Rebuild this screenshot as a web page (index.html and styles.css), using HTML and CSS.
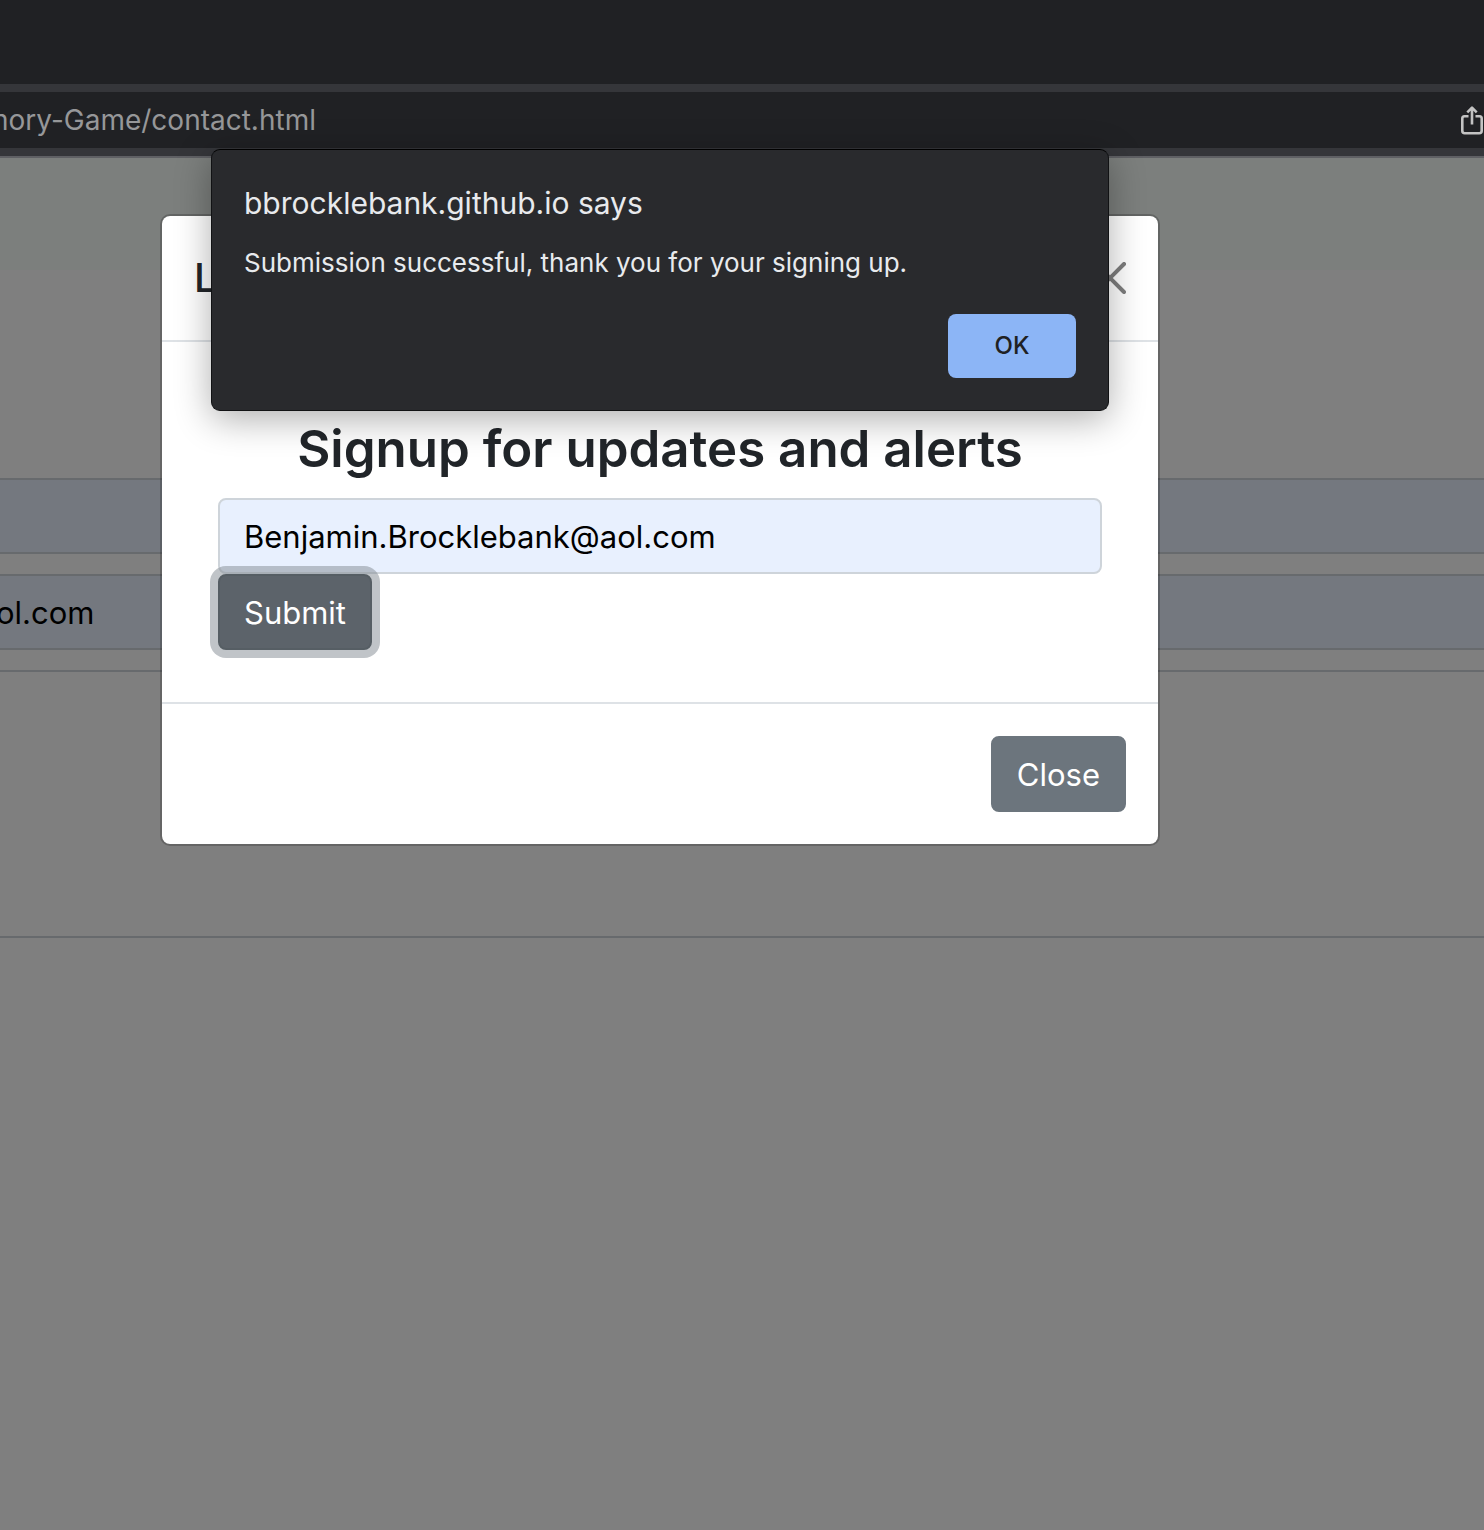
FILE: index.html
```
<!DOCTYPE html>
<html lang="en">
<head>
<meta charset="utf-8">
<meta name="viewport" content="width=device-width, initial-scale=1">
<title>Contact</title>
<link rel="stylesheet" href="styles.css">
</head>
<body>
<div class="browser">
  <div class="tab-strip"></div>
  <div class="toolbar">
    <div class="omnibox">
      <span class="url">mory-Game/contact.html</span>
      <button class="share" type="button" aria-label="Share">
        <svg viewBox="0 0 24 32" width="24" height="32" fill="none" stroke="currentColor" stroke-width="2.600" stroke-linecap="butt" stroke-linejoin="round">
          <path d="M8.500 12.300H4.500Q2.300 12.300 2.300 14.500V26.800Q2.300 29.300 4.800 29.300H19.200Q21.700 29.300 21.700 26.800V14.500Q21.700 12.300 19.500 12.300H15.500M12 20.500V4M7.300 8.300L12 3.600L16.700 8.300"/>
        </svg>
      </button>
    </div>
  </div>
  <div class="viewport">
    <div class="page">
      <header class="page-header"></header>
      <form class="contact-form">
        <input class="field" type="text" aria-label="Name">
        <input class="field" type="text" aria-label="Email" value="ol.com">
        <div class="message"></div>
      </form>
    </div>
    <div class="backdrop">
      <section class="modal" role="dialog" aria-label="Signup">
        <header class="modal-header">
          <h5 class="modal-title">L</h5>
          <button class="modal-x" type="button" aria-label="Dismiss">
            <svg viewBox="0 0 16 16" width="32" height="32"><path fill="currentColor" d="M.293.293a1 1 0 011.414 0L8 6.586 14.293.293a1 1 0 111.414 1.414L9.414 8l6.293 6.293a1 1 0 01-1.414 1.414L8 9.414l-6.293 6.293a1 1 0 01-1.414-1.414L6.586 8 .293 1.707a1 1 0 010-1.414z"/></svg>
          </button>
        </header>
        <form class="modal-body">
          <h1 class="signup-title">Signup for updates and alerts</h1>
          <input class="email" type="email" aria-label="Email address" value="Benjamin.Brocklebank@aol.com">
          <button class="btn btn-submit" type="button">Submit</button>
        </form>
        <footer class="modal-footer">
          <button class="btn" type="button">Close</button>
        </footer>
      </section>
    </div>
  </div>
  <div class="alert-layer">
    <section class="alert" role="alertdialog" aria-labelledby="alert-title">
      <h2 class="alert-title" id="alert-title">bbrocklebank.github.io says</h2>
      <p class="alert-text">Submission successful, thank you for your signing up.</p>
      <button class="alert-ok" type="button">OK</button>
    </section>
  </div>
</div>
</body>
</html>
```

FILE: styles.css
```
* {
  box-sizing: border-box;
}

body {
  margin: 0;
  font-family: Inter, "Liberation Sans", sans-serif;
  background: #808080;
}

h1, h2, h5, p {
  margin: 0;
}

button, input {
  font: inherit;
}

.browser {
  position: relative;
  display: flex;
  flex-direction: column;
  min-height: 100vh;
}

.tab-strip {
  height: 84px;
  background: #202124;
}

.toolbar {
  padding: 8px 0;
  background: #35363a;
  border-bottom: 2px solid #5f6064;
}

.omnibox {
  display: flex;
  align-items: center;
  justify-content: space-between;
  height: 56px;
  overflow: hidden;
  background: #202124;
}

.url {
  margin-left: -16px;
  font-size: 28px;
  line-height: 32px;
  color: #969799;
}

.share {
  display: flex;
  padding: 0;
  border: 0;
  background: none;
  color: #c3c3c3;
}

.viewport {
  position: relative;
  display: flex;
  flex: 1;
  flex-direction: column;
  background: #fff;
}

.page-header {
  height: 112px;
  background: #f9fefb;
}

.contact-form {
  display: flex;
  flex-direction: column;
  gap: 20px;
  padding-top: 208px;
}

.field {
  height: 76px;
  padding: 0;
  border: solid #ced4da;
  border-width: 2px 0;
  border-radius: 0;
  background: #e8f0fe;
  font-size: 31px;
  text-indent: -4px;
  color: #000;
}

.message {
  height: 268px;
  border: solid #ced4da;
  border-width: 2px 0;
}

.backdrop {
  position: absolute;
  inset: 0;
  padding: 56px 164px 56px 0;
  background: rgba(0, 0, 0, 0.5);
}

.modal {
  max-width: 1000px;
  margin: 0 auto;
  border: 2px solid rgba(0, 0, 0, 0.2);
  border-radius: 10px;
  background: #fff;
  background-clip: padding-box;
}

.modal-header {
  display: flex;
  align-items: center;
  justify-content: space-between;
  padding: 32px;
  border-bottom: 2px solid #dee2e6;
}

.modal-title {
  font-size: 40px;
  font-weight: 500;
  line-height: 60px;
  color: #212529;
}

.modal-x {
  display: flex;
  padding: 0;
  border: 0;
  background: none;
  color: #000;
  opacity: 0.5;
}

.modal-body {
  display: flex;
  flex-direction: column;
  padding: 72px 56px 52px;
}

.signup-title {
  margin-bottom: 14px;
  font-size: 51px;
  font-weight: 600;
  line-height: 70px;
  text-align: center;
  color: #212529;
}

.email {
  width: 100%;
  height: 76px;
  padding: 0 24px;
  border: 2px solid #ced4da;
  border-radius: 8px;
  background: #e8f0fe;
  font-size: 31px;
  color: #000;
}

.btn {
  height: 76px;
  padding: 0 24px;
  border: 2px solid #6c757d;
  border-radius: 8px;
  background: #6c757d;
  font-size: 31px;
  color: #fff;
}

.btn-submit {
  align-self: flex-start;
  border-color: #565e64;
  background: #5c636a;
  box-shadow: 0 0 0 8px rgba(130, 138, 145, 0.5);
}

.modal-footer {
  display: flex;
  justify-content: flex-end;
  padding: 32px;
  border-top: 2px solid #dee2e6;
}

.alert-layer {
  position: absolute;
  top: 149px;
  left: 0;
  right: 0;
  padding-right: 164px;
}

.alert {
  display: flex;
  flex-direction: column;
  max-width: 898px;
  margin: 0 auto;
  padding: 35px 32px 32px;
  border: 1px solid #111214;
  border-top-color: #000;
  border-radius: 9px;
  background: #292a2d;
  box-shadow: 0 8px 36px rgba(0, 0, 0, 0.32);
  color: #e8eaed;
}

.alert-title {
  font-size: 30px;
  font-weight: 400;
  line-height: 36px;
}

.alert-text {
  margin: 24px 0 33px;
  font-size: 26px;
  line-height: 36px;
}

.alert-ok {
  align-self: flex-end;
  width: 128px;
  height: 64px;
  padding: 0 0 2px;
  border: 0;
  border-radius: 8px;
  background: #8cb5f6;
  font-size: 24px;
  font-weight: 500;
  color: #202124;
}
```
